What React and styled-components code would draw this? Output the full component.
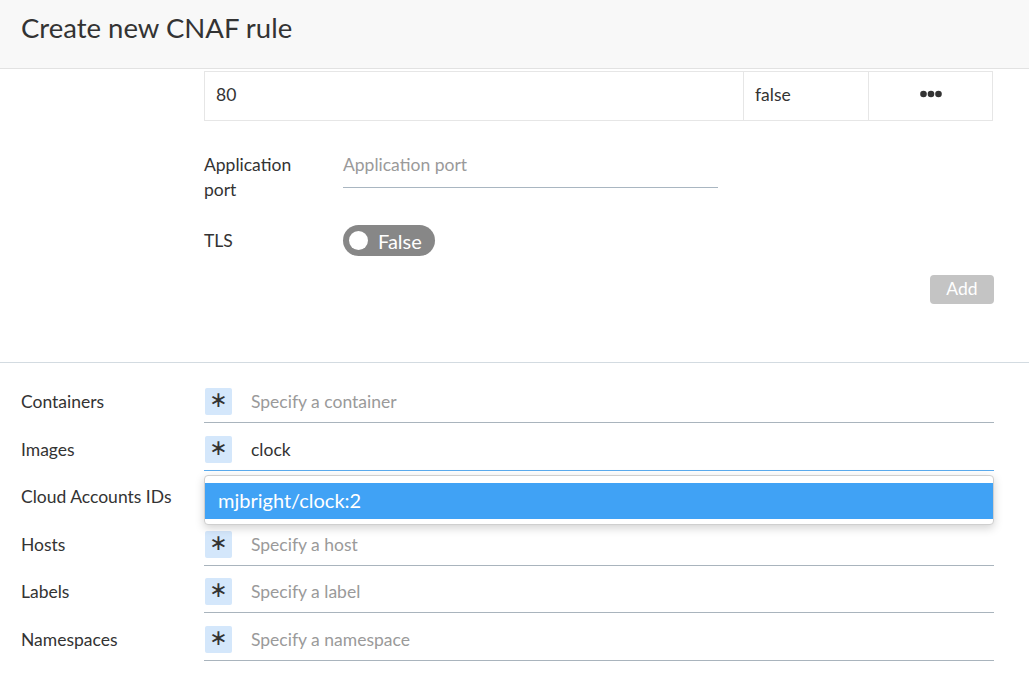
import React from 'react'
import styled, { createGlobalStyle } from 'styled-components'

const Global = createGlobalStyle`
  html, body {
    margin: 0;
    padding: 0;
    background: #fff;
    font-family: Lato, "Open Sans", sans-serif;
    color: #333;
    overflow: hidden;
  }
  * { box-sizing: border-box; }
`

const Page = styled.div`
  width: 1029px;
  height: 688px;
  overflow: hidden;
`

const Header = styled.header`
  height: 69px;
  background: #f8f8f8;
  border-bottom: 1px solid #e2e2e2;
  display: flex;
  align-items: center;
  padding: 0 21px 13px;
`

const Title = styled.h1`
  margin: 0;
  font-size: 27.5px;
  font-weight: 400;
  color: #333;
`

const Upper = styled.section`
  padding: 2px 35px 0 204px;
`

const Table = styled.div`
  display: grid;
  grid-template-columns: 538px 125px 1fr;
  border: 1px solid #e6e6e6;
  width: 789px;
`

const Cell = styled.div`
  height: 48px;
  display: flex;
  align-items: center;
  justify-content: ${p => (p.$center ? 'center' : 'flex-start')};
  padding: 0 11px 4px;
  font-size: 17.5px;
  border-left: ${p => (p.$first ? 'none' : '1px solid #e6e6e6')};
`

const FormRow = styled.div`
  display: flex;
  align-items: ${p => p.$align || 'flex-start'};
  margin-top: ${p => p.$top}px;
`

const SmallLabel = styled.label`
  width: 139px;
  padding-right: 38px;
  font-size: 17.5px;
  line-height: 25px;
`

const TextInput = styled.div`
  width: 375px;
  height: 36px;
  padding-top: 2px;
  font-size: 17.5px;
  line-height: 22px;
  color: #9a9a9a;
  border-bottom: 1px solid #a9b6c1;
`

const Toggle = styled.div`
  display: flex;
  align-items: center;
  gap: 10px;
  width: 92px;
  height: 31px;
  padding-left: 6px;
  border-radius: 16px;
  background: #878787;
  color: #fff;
  font-size: 20px;
`

const Knob = styled.span`
  width: 19px;
  height: 19px;
  border-radius: 50%;
  background: #fff;
`

const Actions = styled.div`
  display: flex;
  justify-content: flex-end;
  margin-top: 19px;
  width: 790px;
`

const AddButton = styled.button`
  width: 64px;
  height: 29px;
  border: none;
  border-radius: 4px;
  background: #c4c4c4;
  color: #fff;
  font-family: inherit;
  font-size: 17.5px;
  padding: 0 0 2px;
`

const Divider = styled.hr`
  margin: 58px 0 0;
  border: none;
  border-top: 1px solid #d3dbe1;
`

const Lower = styled.section`
  position: relative;
  display: grid;
  grid-template-columns: 204px 790px;
  grid-auto-rows: 47.5px;
  padding-top: 25px;
`

const RowLabel = styled.div`
  padding-left: 21px;
  font-size: 17.5px;
  line-height: 27px;
`

const Field = styled.div`
  position: relative;
  display: flex;
  align-items: center;
  gap: 19px;
  height: 35px;
  padding: 0 0 7px 1px;
  border-bottom: 1px solid ${p => (p.$focused ? '#5aabee' : '#a9b4bd')};
  font-size: 17.5px;
  color: ${p => (p.$value ? '#333' : '#9a9a9a')};
`

const Star = styled.span`
  width: 27px;
  height: 27px;
  border-radius: 2px;
  background: #d4e7fb;
  color: #333;
  font-family: "DejaVu Sans", sans-serif;
  font-size: 22px;
  display: flex;
  align-items: center;
  justify-content: center;
  line-height: 1;
  padding-bottom: 3px;
`

const Menu = styled.div`
  position: absolute;
  left: 0;
  right: 0;
  top: 39px;
  z-index: 2;
  height: 50px;
  padding: 7px 0;
  background: #fff;
  border: 1px solid #cfcfcf;
  border-radius: 4px;
  box-shadow: 0 3px 10px rgba(0, 0, 0, 0.18);
`

const Option = styled.div`
  height: 36px;
  display: flex;
  align-items: center;
  padding: 0 0 2px 13px;
  background: #40a2f5;
  color: #fff;
  font-size: 20px;
`

const Dots = () => (
  <svg width="22" height="8" viewBox="0 0 22 8">
    <circle cx="3.5" cy="4" r="3.3" fill="#333" />
    <circle cx="11" cy="4" r="3.3" fill="#333" />
    <circle cx="18.5" cy="4" r="3.3" fill="#333" />
  </svg>
)

const scopes = [
  { label: 'Containers', text: 'Specify a container' },
  { label: 'Images', text: 'clock', value: true, focused: true, menu: ['mjbright/clock:2'] },
  { label: 'Cloud Accounts IDs', text: 'Specify a cloud account' },
  { label: 'Hosts', text: 'Specify a host' },
  { label: 'Labels', text: 'Specify a label' },
  { label: 'Namespaces', text: 'Specify a namespace' },
]

export default function App() {
  return (
    <Page>
      <Global />
      <Header>
        <Title>Create new CNAF rule</Title>
      </Header>
      <Upper>
        <Table>
          <Cell $first>80</Cell>
          <Cell>false</Cell>
          <Cell $center>
            <Dots />
          </Cell>
        </Table>
        <FormRow $top={31}>
          <SmallLabel>Application port</SmallLabel>
          <TextInput>Application port</TextInput>
        </FormRow>
        <FormRow $top={23} $align="center">
          <SmallLabel>TLS</SmallLabel>
          <Toggle>
            <Knob />
            False
          </Toggle>
        </FormRow>
        <Actions>
          <AddButton>Add</AddButton>
        </Actions>
      </Upper>
      <Divider />
      <Lower>
        {scopes.map(s => (
          <React.Fragment key={s.label}>
            <RowLabel>{s.label}</RowLabel>
            <Field $focused={s.focused} $value={s.value}>
              <Star>∗</Star>
              {s.text}
              {s.menu && (
                <Menu>
                  {s.menu.map(m => (
                    <Option key={m}>{m}</Option>
                  ))}
                </Menu>
              )}
            </Field>
          </React.Fragment>
        ))}
      </Lower>
    </Page>
  )
}
